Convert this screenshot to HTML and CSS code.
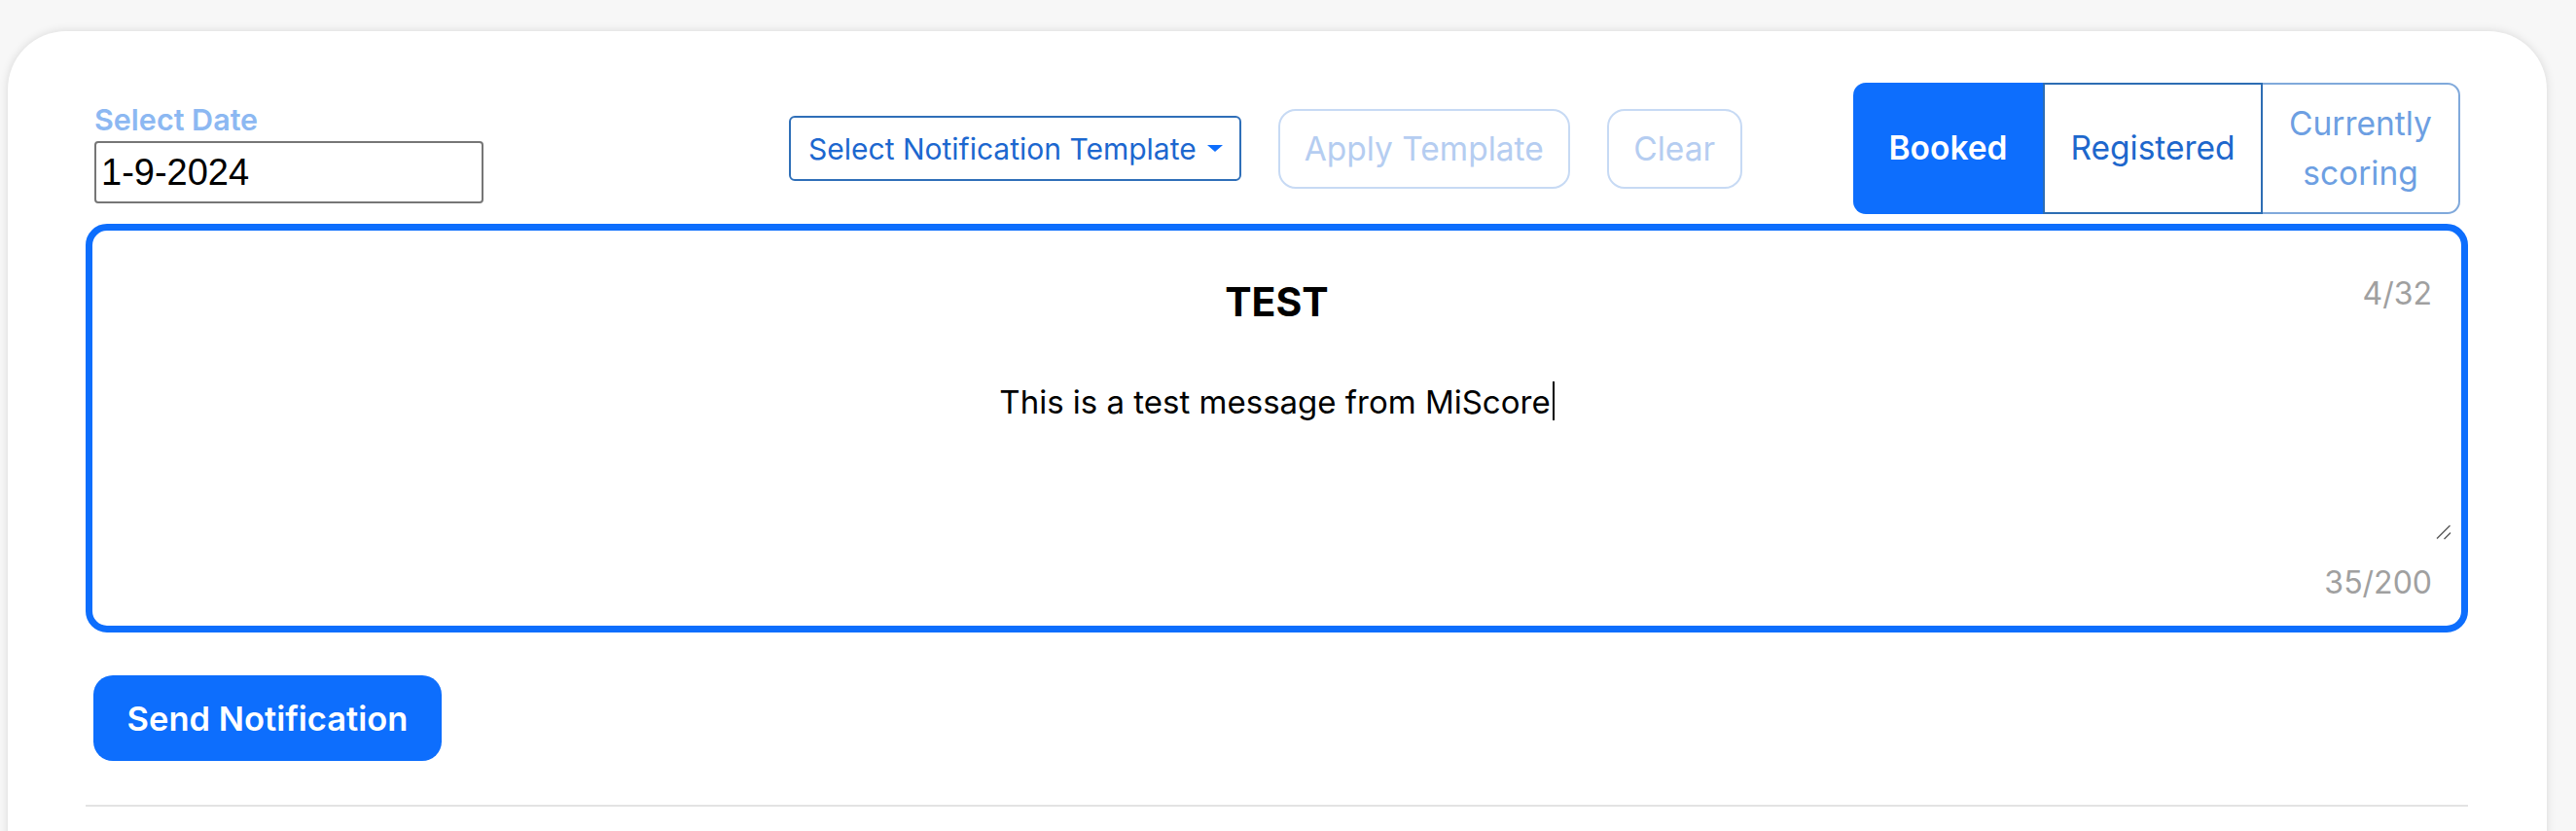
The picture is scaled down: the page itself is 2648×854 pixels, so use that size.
FILE: index.html
```html
<!DOCTYPE html>
<html lang="en">
<head>
<meta charset="utf-8">
<title>Notifications</title>
<link rel="stylesheet" href="styles.css">
</head>
<body>
<div class="card">
  <div class="toolbar">
    <div class="date-group">
      <label class="date-label">Select Date</label>
      <div class="date-input">1-9-2024</div>
    </div>
    <div class="actions">
      <button class="dropdown">Select Notification Template<svg class="caret" viewBox="0 0 16 7" width="16" height="7"><path d="M0 0 H16 L8 7 Z" fill="#0d6efd"/></svg></button>
      <button class="ghost apply">Apply Template</button>
      <button class="ghost clear">Clear</button>
    </div>
    <div class="segmented">
      <div class="seg seg-active">Booked</div>
      <div class="seg seg-reg">Registered</div>
      <div class="seg seg-cur">Currently<br>scoring</div>
    </div>
  </div>

  <div class="composer">
    <div class="title-row">
      <div class="title">TEST</div>
      <div class="count">4/32</div>
    </div>
    <div class="message">
      <span>This is a test message from MiScore</span><span class="cursor"></span>
      <svg class="grip" viewBox="0 0 16 16" width="16" height="16"><path d="M1 14.5 L14.5 1 M8.5 15 L15 8.5" stroke="#555" stroke-width="1.3" fill="none"/></svg>
    </div>
    <div class="count count-bottom">35/200</div>
  </div>

  <button class="send">Send Notification</button>
  <div class="divider"></div>
</div>
</body>
</html>
```
FILE: styles.css
```css
html, body {
  margin: 0;
  padding: 0;
}
body {
  background: #f7f7f7;
  font-family: "Inter", "Liberation Sans", sans-serif;
  overflow: hidden;
  color: #000;
}
button {
  font-family: inherit;
  cursor: pointer;
}
.card {
  margin: 32px 30px 0 8px;
  background: #fff;
  border-radius: 60px 60px 0 0;
  box-shadow: 0 0 10px rgba(0, 0, 0, 0.13);
  padding: 53px 81px 80px 80px;
}
.toolbar {
  display: flex;
  align-items: center;
  height: 135px;
  padding: 0 8px 0 9px;
}
.date-group {
  align-self: flex-start;
  padding-top: 19px;
  display: flex;
  flex-direction: column;
  gap: 4px;
}
.date-label {
  font-size: 30.5px;
  font-weight: 600;
  line-height: 37px;
  color: #8cb8f2;
}
.date-input {
  width: 400px;
  height: 64px;
  box-sizing: border-box;
  border: 2px solid #767676;
  border-radius: 4px;
  padding-left: 5px;
  display: flex;
  align-items: center;
  font-family: "Liberation Sans", sans-serif;
  font-size: 38px;
}
.actions {
  display: flex;
  align-items: center;
  gap: 38px;
  margin-left: 314px;
}
.dropdown {
  height: 67px;
  box-sizing: border-box;
  border: 2px solid #2f6fb8;
  border-radius: 6px;
  padding: 0 17px 0 18px;
  display: flex;
  align-items: center;
  gap: 11px;
  font-size: 30px;
  color: #1c67cf;
  background: #fff;
}
.caret {
  display: block;
}
.ghost {
  height: 82px;
  box-sizing: border-box;
  border: 2px solid #c7daf4;
  border-radius: 18px;
  background: #fff;
  color: #b5cdf1;
  font-size: 33.5px;
  padding: 0;
}
.apply {
  width: 300px;
}
.clear {
  width: 139px;
}
.segmented {
  margin-left: auto;
  display: flex;
  height: 135px;
}
.seg {
  display: flex;
  align-items: center;
  justify-content: center;
  text-align: center;
  box-sizing: border-box;
  font-size: 33.5px;
  line-height: 51px;
}
.seg-active {
  width: 195px;
  background: #0d6efd;
  color: #fff;
  font-weight: 600;
  border-radius: 13px 0 0 13px;
}
.seg-reg {
  width: 226px;
  border: 2px solid #2d6db3;
  color: #1d67cc;
}
.seg-cur {
  width: 203px;
  border: 2px solid #80a9db;
  border-left: none;
  color: #6d9fe2;
  border-radius: 0 13px 13px 0;
}
.composer {
  margin-top: 10px;
  border: 7px solid #0d6efd;
  border-radius: 22px;
  padding: 45px 0 25px;
}
.title-row {
  display: grid;
  grid-template-columns: 1fr auto 1fr;
  align-items: start;
  padding: 0 30px;
}
.title {
  grid-column: 2;
  margin-top: 4px;
  font-size: 41px;
  font-weight: 700;
  line-height: 48px;
}
.count {
  justify-self: end;
  font-size: 32px;
  line-height: 39px;
  color: #a0a0a0;
}
.message {
  position: relative;
  margin: 58px 8px 0;
  height: 165px;
  text-align: center;
  font-size: 33px;
  line-height: 39px;
}
.cursor {
  display: inline-block;
  width: 2px;
  height: 40px;
  margin-left: 2px;
  background: #000;
  vertical-align: -7px;
}
.grip {
  position: absolute;
  right: 2px;
  bottom: 2px;
}
.count-bottom {
  text-align: right;
  padding-right: 30px;
  margin-top: 22px;
}
.send {
  display: block;
  margin: 44px 0 0 8px;
  width: 358px;
  height: 88px;
  border: none;
  border-radius: 20px;
  background: #0d6efd;
  color: #fff;
  font-size: 34.5px;
  font-weight: 600;
  padding: 0;
}
.divider {
  margin-top: 45px;
  height: 2px;
  background: #e3e3e3;
}
```
